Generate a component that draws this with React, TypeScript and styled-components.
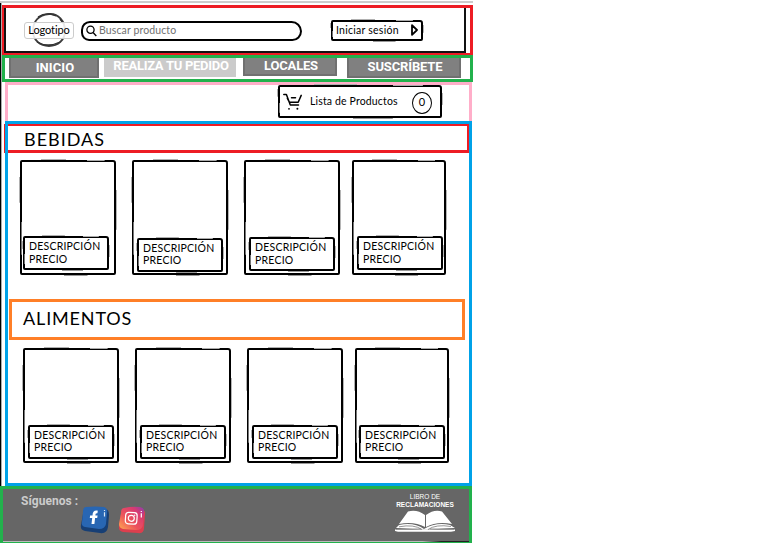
import React from 'react';
import styled, { createGlobalStyle, css } from 'styled-components';

const GlobalStyle = createGlobalStyle`
  *, *::before, *::after { box-sizing: border-box; }
  body { margin: 0; background: #fff; font-family: Lato, "Open Sans", sans-serif; color: #000; overflow: hidden; }
`;

/* Hand-drawn outline: a dark border with grey pencil slips along its edges. */
const sketch = css`
  position: relative;
  border: 2px solid #000;
  border-radius: 2px 3px 2px 2px;
  &::before {
    content: '';
    position: absolute;
    inset: -3px;
    pointer-events: none;
    background:
      linear-gradient(#b0b0b0, #b0b0b0) 30% 0 / 26% 1px no-repeat,
      linear-gradient(#aaa, #aaa) 85% 1px / 18% 1px no-repeat,
      linear-gradient(#b5b5b5, #b5b5b5) 100% 40% / 1px 34% no-repeat,
      linear-gradient(#777, #777) 2px 75% / 1px 28% no-repeat,
      linear-gradient(#b0b0b0, #b0b0b0) 0 20% / 1px 22% no-repeat,
      linear-gradient(#999, #999) 60% 100% / 24% 1px no-repeat;
  }
`;

const Page = styled.div`
  isolation: isolate;
  width: 473px;
  height: 543px;
  padding-top: 5px;
  border-top: 1px solid #fff;
  background:
    linear-gradient(#ccc, #ccc) 0 0 / 100% 2px no-repeat,
    linear-gradient(90deg, #000 1px, #aaa 1px, #aaa 2px, transparent 2px);
  display: flex;
  flex-direction: column;
`;

const Header = styled.header`
  flex: none;
  height: 50px;
  margin: -1px 0 0 2px;
  border: 3px solid #ed1c24;
  border-bottom-width: 2px;
`;

const HeaderInner = styled.div`
  height: 45px;
  width: 462px;
  margin-left: -1px;
  border: solid #111;
  border-width: 0 2px 2px 2px;
  display: flex;
  align-items: flex-start;
`;

const Logo = styled.div`
  position: relative;
  width: 50px;
  height: 36px;
  margin: 4px 0 0 18px;
  display: grid;
  place-items: center;
  svg { position: absolute; left: 0; top: 0; }
`;

const LogoName = styled.span`
  position: relative;
  width: 50px;
  height: 17px;
  border: 1px solid #ccc;
  border-radius: 3px;
  background: rgba(255, 255, 255, 0.88);
  font-size: 11px;
  line-height: 14px;
  letter-spacing: -0.1px;
  text-align: center;
`;

const Search = styled.div`
  width: 221px;
  height: 20px;
  margin: 13px 0 0 7px;
  border: 2px solid #000;
  border-radius: 12px 14px 13px 11px;
  display: flex;
  align-items: center;
  gap: 2px;
  padding-left: 3px;
  color: #707070;
  font-size: 10.5px;
  letter-spacing: 0.12px;
  line-height: 14px;
  svg { color: #000; }
  span { margin-top: -2px; }
`;

const Login = styled.div`
  ${sketch}
  width: 92px;
  height: 21px;
  margin: 12px 0 0 29px;
  padding: 0 3px 1px 3px;
  display: flex;
  justify-content: space-between;
  align-items: center;
  font-size: 10.5px;
  letter-spacing: 0.25px;
  white-space: nowrap;
`;

const Nav = styled.nav`
  flex: none;
  height: 27px;
  margin-left: 2px;
  border: 3px solid #22b14c;
  display: flex;
  align-items: flex-start;
  padding-left: 4px;
`;

const NavItem = styled.div<{ $w: number; $h: number; $gap?: number; $light?: boolean; $lh: number; $ls?: number }>`
  width: ${p => p.$w}px;
  height: ${p => p.$h}px;
  margin-left: ${p => p.$gap ?? 0}px;
  padding-left: 2px;
  background: ${p => (p.$light ? '#cbcbcb' : '#808080')};
  border: solid ${p => (p.$light ? '#cbcbcb' : '#707070')};
  border-width: 0 2px 2px 2px;
  color: #fff;
  font: bold 13px/${p => p.$lh}px Roboto, "Liberation Sans", sans-serif;
  letter-spacing: ${p => p.$ls ?? 0}px;
  text-align: center;
  white-space: nowrap;
`;

const CartBar = styled.div`
  flex: none;
  width: 467px;
  height: 39px;
  margin-left: 5px;
  border: 3px solid #ffaec9;
  border-bottom: 0;
  padding-left: 270px;
`;

const Cart = styled.div`
  ${sketch}
  width: 164px;
  height: 33px;
  display: flex;
  align-items: center;
  padding-left: 3px;
  font-size: 10.5px;
  letter-spacing: 0.15px;
`;

const CartLabel = styled.span`
  width: 102px;
  margin-left: 8px;
  padding-bottom: 1px;
`;

const Count = styled.span`
  width: 20px;
  height: 22px;
  margin-top: 2px;
  border: 1.5px solid #000;
  border-radius: 50%;
  line-height: 17px;
  font-size: 11px;
  text-align: center;
`;

const Catalog = styled.main`
  flex: none;
  width: 467px;
  height: 365px;
  margin-left: 5px;
  border: 3px solid #00a2e8;
`;

/* Sits beneath the catalog border, which overlaps both of its ends. */
const Heading = styled.h2<{ $food?: boolean }>`
  position: relative;
  z-index: -1;
  margin: ${p => (p.$food ? '24px 0 0 1px' : '0 0 0 -4px')};
  width: ${p => (p.$food ? 456 : 466)}px;
  height: ${p => (p.$food ? 41 : 29)}px;
  padding-left: ${p => (p.$food ? 11 : 17)}px;
  border: 3px solid ${p => (p.$food ? '#ff7f27' : '#ed1c24')};
  border-top-width: ${p => (p.$food ? 3 : 2)}px;
  font-size: 18px;
  font-weight: 400;
  line-height: ${p => (p.$food ? 33 : 27)}px;
  letter-spacing: ${p => (p.$food ? 0.85 : 1)}px;
`;

const Shelf = styled.div<{ $food?: boolean }>`
  display: grid;
  grid-template-columns: 96px 96px 96px 94px;
  column-gap: 16px;
  padding: ${p => (p.$food ? '8px 0 0 15px' : '7px 0 0 12px')};
  & > :last-child { margin-left: -4px; width: 94px; }
`;

const Card = styled.article`
  ${sketch}
  height: 115px;
  padding-left: 2px;
`;

const Caption = styled.div<{ $top: number; $lh: number; $shift: number }>`
  ${sketch}
  width: 86px;
  height: 34px;
  margin-top: ${p => p.$top}px;
  margin-left: ${p => p.$shift}px;
  padding: 2px 0 0 4px;
  font-size: 10.5px;
  line-height: ${p => p.$lh}px;
  letter-spacing: 0.22px;
  white-space: nowrap;
`;

const Footer = styled.footer`
  flex: none;
  width: 472px;
  height: 57px;
  border: 3px solid #22b14c;
  border-bottom-width: 1px;
  background: linear-gradient(90deg, #bbb 90%, #222 94%) 0 100% / 100% 1px no-repeat, #666;
  display: flex;
`;

const Follow = styled.span`
  width: 59px;
  margin: 5px 0 0 18px;
  color: #ccc;
  font: bold 12px/14px Roboto, "Liberation Sans", sans-serif;
  letter-spacing: 0.05px;
  white-space: nowrap;
`;

const Socials = styled.div`
  display: flex;
  gap: 9px;
  margin-top: 17px;
`;

const Claims = styled.div`
  width: 62px;
  margin: 4px 0 0 248px;
  color: #fff;
  font: 6.5px/7px "Liberation Sans", Arial, sans-serif;
  text-align: center;
  white-space: nowrap;
  b { display: block; margin-top: 1px; font-weight: 700; font-size: 6.5px; letter-spacing: 0.02px; }
  svg { display: block; margin-top: 1px; }
`;

const LogoRing = () => (
  <svg width="50" height="38" fill="none">
    <path d="M25 2 C34 1 41 9 41 19 C41 28 34 34 25 34 C16 34 9 28 9 19 C9 9 15 3 25 2Z" stroke="#3c3c3c" strokeWidth="2" />
    <path d="M14 5 Q20 1 26 2 L32 4 M36 7 L39 11 M13 30 Q24 36 36 30" stroke="#333" strokeWidth="1.3" />
  </svg>
);

const SearchIcon = () => (
  <svg width="11" height="12" fill="none" stroke="currentColor" strokeWidth="1.3">
    <circle cx="4.5" cy="4.7" r="3.6" />
    <path d="M7.1 7.5 L10.3 11" />
  </svg>
);

const ArrowIcon = () => (
  <svg width="7" height="12" fill="none" stroke="#000" strokeWidth="1.8" strokeLinejoin="round">
    <path d="M1 1.2 L6 6 L1 10.8Z" />
  </svg>
);

const CartIcon = () => (
  <svg width="19" height="18" fill="none" stroke="#000" strokeWidth="1.5" strokeLinecap="round" strokeLinejoin="round">
    <path d="M.8 1.5 H3.4 L7.3 12 H15.5 M4.4 5.3 L6.5 9.3 H15.2 L18.2 2.4 M8.5 4.8 H12.5" />
    <circle cx="6" cy="15.8" r=".9" fill="#000" stroke="none" />
    <circle cx="14.4" cy="15.8" r="1" fill="#000" stroke="none" />
  </svg>
);

const FacebookIcon = () => (
  <svg width="29" height="28">
    <path d="M6 3 Q16 1 26 3 Q29 4 29 9 L28 21 Q27 28 20 27 L5 25 Q0 24 1 19 L3 8 Q3 4 6 3Z" fill="#173f75" />
    <path d="M6 1 Q15 0 24 1 Q28 2 27 7 L26 18 Q25 23 19 23 L5 21 Q1 20 2 16 L3 6 Q3 1 6 1Z" fill="#2866b3" />
    <path d="M11.5 18 L12.2 12 H9.8 L10.1 9.5 H12.5 C12.7 5.7 14 4.2 17.8 4.7 L17.4 7.3 C15.8 7.1 15.5 7.8 15.4 9.5 H17.6 L17.2 12 H15.1 L14.4 18Z" fill="#fff" />
    <path d="M24.5 4 V4.9 M24.5 6.2 V10.5" stroke="#dbe7f5" strokeWidth="1.2" />
  </svg>
);

const InstagramIcon = () => (
  <svg width="28" height="28">
    <defs>
      <linearGradient id="insta" x1="0" y1="1" x2="1" y2="0">
        <stop offset="0" stopColor="#ffad50" />
        <stop offset=".4" stopColor="#ed535b" />
        <stop offset=".75" stopColor="#d83b71" />
        <stop offset="1" stopColor="#883db4" />
      </linearGradient>
    </defs>
    <path d="M6 3 L23 3 Q28 4 27 9 L26 22 Q26 28 20 27 L5 26 Q0 25 1 20 L3 8 Q3 4 6 3Z" fill="#dc3f4e" />
    <path d="M6 2 Q14 0 22 1 Q27 2 26 7 L25 19 Q24 24 18 24 L5 23 Q1 22 1 18 L3 7 Q3 2 6 2Z" fill="url(#insta)" />
    <g fill="none" stroke="#fff" strokeWidth="1.2">
      <rect x="7.5" y="6.5" width="11.5" height="11.5" rx="3" transform="rotate(4 13 12)" />
      <circle cx="13.3" cy="12.3" r="3" />
      <path d="M23.3 5 V6 M23.3 7.2 V11.5" />
    </g>
    <circle cx="16.7" cy="9.2" r=".7" fill="#fff" />
  </svg>
);

const BookIcon = () => (
  <svg width="62" height="25" fill="#fff">
    <path d="M14 2.5 Q23 0 31 6 V18 Q20 12 5 15Z M32 6 Q40 0 48 2.5 L58 15 Q43 12 32 18Z" />
    <path d="M5 16 Q20 13 30 20 Q42 13 56 16 L61 19 L31 20.8 L2 19Z" />
    <path d="M1 20.5 H61 V22 L57 22.8 H4 L1 22Z" />
    <path d="M5 17.8 Q20 15 28 20.5 M57 17.5 Q42 15 34 20.5 M2 20 H27 M36 20 H60" fill="none" stroke="#666" strokeWidth=".7" />
  </svg>
);

type Product = { top: number; lh: number; shift: number };

const drinks: Product[] = [
  { top: 74, lh: 12.5, shift: -1 },
  { top: 76, lh: 12, shift: 1 },
  { top: 75, lh: 12.5, shift: 1 },
  { top: 74, lh: 12.5, shift: 1 },
];

const food: Product[] = [
  { top: 75, lh: 12, shift: 1 },
  { top: 75, lh: 12, shift: 1 },
  { top: 75, lh: 12, shift: 1 },
  { top: 75, lh: 12, shift: 0 },
];

const Products = ({ items, isFood }: { items: Product[]; isFood?: boolean }) => (
  <Shelf $food={isFood}>
    {items.map((p, i) => (
      <Card key={i}>
        <Caption $top={p.top} $lh={p.lh} $shift={p.shift}>DESCRIPCIÓN<br />PRECIO</Caption>
      </Card>
    ))}
  </Shelf>
);

export default function App() {
  return (
    <>
      <GlobalStyle />
      <Page>
        <Header>
          <HeaderInner>
            <Logo><LogoRing /><LogoName>Logotipo</LogoName></Logo>
            <Search><SearchIcon /><span>Buscar producto</span></Search>
            <Login>Iniciar sesión<ArrowIcon /></Login>
          </HeaderInner>
        </Header>
        <Nav>
          <NavItem $w={90} $h={20} $lh={20} $ls={0.1}>INICIO</NavItem>
          <NavItem $w={132} $h={19} $gap={5} $lh={15} $ls={-0.28} $light>REALIZA TU PEDIDO</NavItem>
          <NavItem $w={94} $h={18} $gap={7} $lh={16} $ls={-0.2}>LOCALES</NavItem>
          <NavItem $w={114} $h={20} $gap={10} $lh={18} $ls={-0.15}>SUSCRÍBETE</NavItem>
        </Nav>
        <CartBar>
          <Cart><CartIcon /><CartLabel>Lista de Productos</CartLabel><Count>0</Count></Cart>
        </CartBar>
        <Catalog>
          <Heading>BEBIDAS</Heading>
          <Products items={drinks} />
          <Heading $food>ALIMENTOS</Heading>
          <Products items={food} isFood />
        </Catalog>
        <Footer>
          <Follow>Síguenos :</Follow>
          <Socials><FacebookIcon /><InstagramIcon /></Socials>
          <Claims>LIBRO DE<b>RECLAMACIONES</b><BookIcon /></Claims>
        </Footer>
      </Page>
    </>
  );
}
